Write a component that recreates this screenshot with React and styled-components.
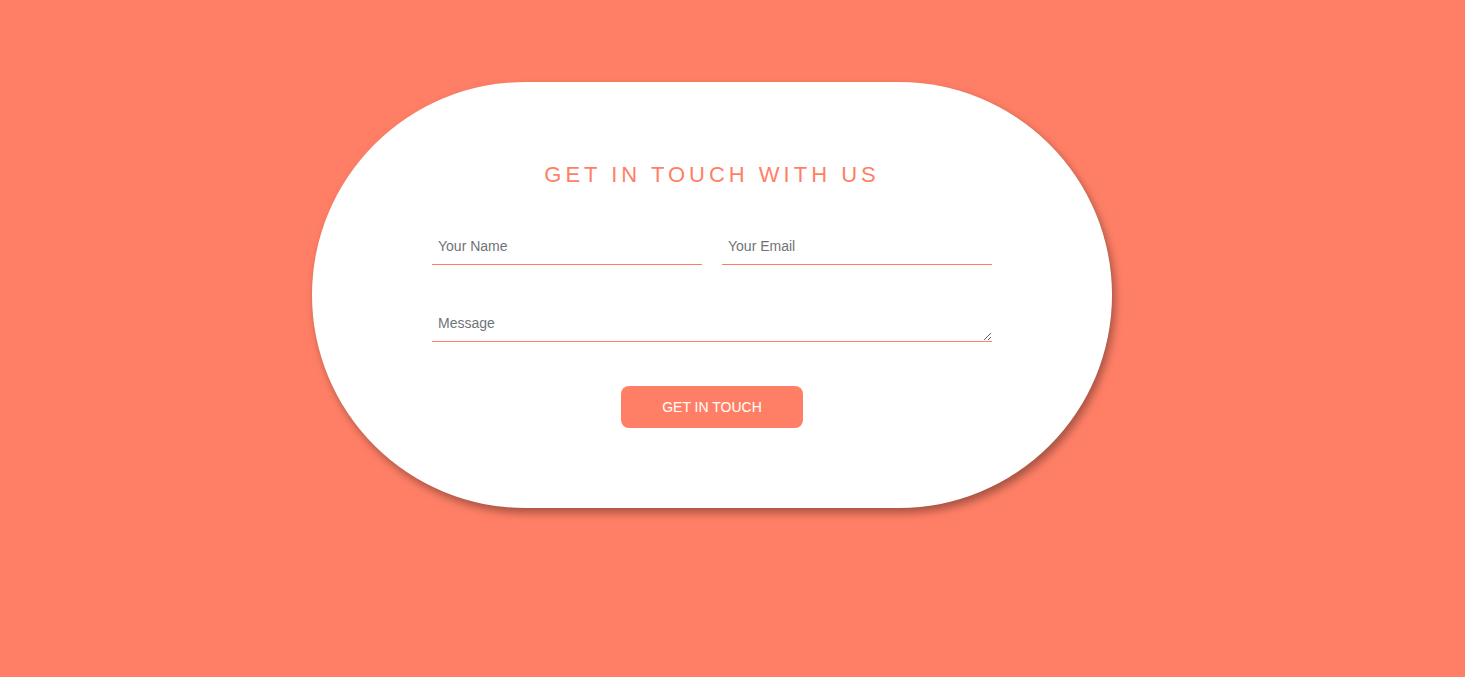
import React from "react";
import styled, { createGlobalStyle } from "styled-components";

const coral = "#ff7f66";

const GlobalStyle = createGlobalStyle`
  html, body {
    margin: 0;
    padding: 0;
    background: ${coral};
    font-family: "Liberation Sans", Arial, sans-serif;
  }
`;

const Page = styled.div`
  min-height: 677px;
  padding-top: 82px;
  box-sizing: border-box;
`;

const Card = styled.form`
  width: 800px;
  height: 426px;
  margin-left: 312px;
  box-sizing: border-box;
  padding: 77px 120px 0;
  background: #fff;
  border-radius: 213px;
  box-shadow: 3px 5px 8px rgba(0, 0, 0, 0.35);
  display: flex;
  flex-direction: column;
  align-items: stretch;
`;

const Title = styled.h2`
  margin: 0;
  text-align: center;
  color: ${coral};
  font-weight: 400;
  font-size: 22px;
  line-height: 32px;
  letter-spacing: 4px;
  text-transform: uppercase;
`;

const Row = styled.div`
  display: grid;
  grid-template-columns: 1fr 1fr;
  gap: 20px;
  margin-top: 37px;
`;

const Field = styled.input`
  width: 100%;
  box-sizing: border-box;
  height: 37px;
  padding: 7px 6px 7px;
  border: none;
  border-bottom: 1px solid ${coral};
  outline: none;
  font-family: inherit;
  font-size: 14px;
  color: #333;
  background: transparent;
  &::placeholder {
    color: #6f7478;
  }
`;

const Message = styled.textarea`
  width: 100%;
  box-sizing: border-box;
  height: 37px;
  margin-top: 40px;
  padding: 10px 6px 4px;
  border: none;
  border-bottom: 1px solid ${coral};
  outline: none;
  font-family: inherit;
  font-size: 14px;
  line-height: 16px;
  color: #333;
  background: transparent;
  display: block;
  &::placeholder {
    color: #6f7478;
  }
`;

const Button = styled.button`
  align-self: center;
  margin-top: 44px;
  width: 182px;
  height: 42px;
  border: none;
  border-radius: 8px;
  background: ${coral};
  color: #fff;
  font-family: inherit;
  font-size: 14px;
  text-transform: uppercase;
  cursor: pointer;
`;

export default function App() {
  return (
    <>
      <GlobalStyle />
      <Page>
        <Card onSubmit={(e) => e.preventDefault()}>
          <Title>Get in touch with us</Title>
          <Row>
            <Field type="text" placeholder="Your Name" />
            <Field type="email" placeholder="Your Email" />
          </Row>
          <Message placeholder="Message" rows={1} />
          <Button type="submit">Get in touch</Button>
        </Card>
      </Page>
    </>
  );
}
